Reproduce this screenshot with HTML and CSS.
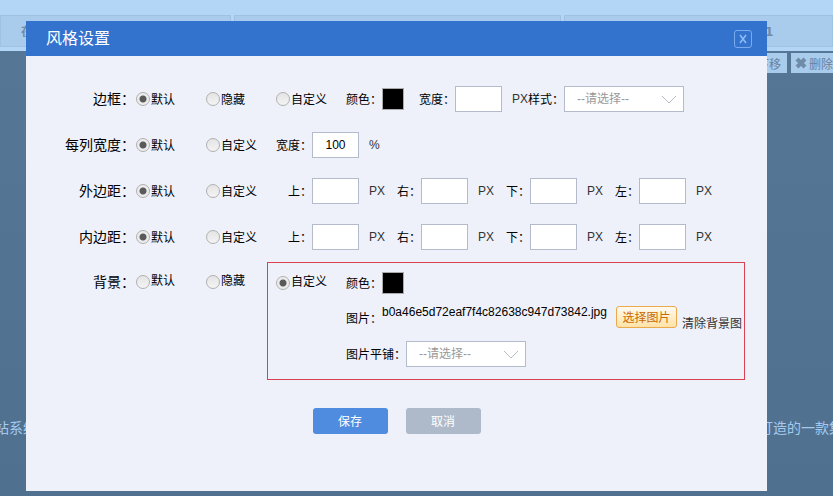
FILE: index.html
```
<!DOCTYPE html>
<html lang="zh-CN">
<head>
    <meta charset="UTF-8">
    <meta name="viewport" content="width=device-width, initial-scale=1.0">
    <title>风格设置</title>
    <link rel="stylesheet" href="styles.css">
</head>
<body>
    <div class="page">
        <div class="tabs">
            <div class="tab first">在</div>
            <div class="tab"></div>
            <div class="tab last">1</div>
        </div>
        <div class="tools">
            <button class="tool" type="button">下移</button>
            <button class="tool" type="button">
                <svg width="12" height="12" viewBox="0 0 12 12"><path d="M2 2L10 10M10 2L2 10" stroke="#6f8ba8" stroke-width="4"/></svg>删除
            </button>
        </div>
        <div class="intro">
            <span>站系统</span>
            <span>打造的一款集</span>
        </div>
    </div>

    <div class="dialog" role="dialog" aria-labelledby="title">
        <div class="header">
            <h1 id="title">风格设置</h1>
            <button class="close" type="button" aria-label="关闭">
                <svg width="8" height="10" viewBox="0 0 8 10"><path d="M1 1L7 9M7 1L1 9" stroke="#8dbcf5" stroke-width="1.6"/></svg>
            </button>
        </div>
        <form class="body">
            <div class="row">
                <span class="name">边框：</span>
                <label class="option"><input type="radio" name="border" checked><span>默认</span></label>
                <label class="option"><input type="radio" name="border"><span>隐藏</span></label>
                <label class="option"><input type="radio" name="border"><span>自定义</span></label>
                <span class="text">颜色：</span>
                <button class="color" type="button" aria-label="边框颜色"></button>
                <label class="text" for="bw">宽度：</label>
                <input class="num" id="bw" type="text">
                <span class="unit">PX</span>
                <label class="text" for="bs">样式：</label>
                <div class="select">
                    <select id="bs"><option>--请选择--</option></select>
                    <svg width="16" height="9" viewBox="0 0 16 9"><path d="M1 1L8 8L15 1" fill="none" stroke="#b9bdc6"/></svg>
                </div>
            </div>
            <div class="row">
                <span class="name">每列宽度：</span>
                <label class="option"><input type="radio" name="col" checked><span>默认</span></label>
                <label class="option"><input type="radio" name="col"><span>自定义</span></label>
                <label class="text" for="cw">宽度：</label>
                <input class="num" id="cw" type="text" value="100">
                <span class="unit">%</span>
            </div>
            <div class="row">
                <span class="name">外边距：</span>
                <label class="option"><input type="radio" name="margin" checked><span>默认</span></label>
                <label class="option"><input type="radio" name="margin"><span>自定义</span></label>
                <div class="sides">
                    <label><span class="text">上：</span><input class="num" type="text"><span class="unit">PX</span></label>
                    <label><span class="text">右：</span><input class="num" type="text"><span class="unit">PX</span></label>
                    <label><span class="text">下：</span><input class="num" type="text"><span class="unit">PX</span></label>
                    <label><span class="text">左：</span><input class="num" type="text"><span class="unit">PX</span></label>
                </div>
            </div>
            <div class="row">
                <span class="name">内边距：</span>
                <label class="option"><input type="radio" name="padding" checked><span>默认</span></label>
                <label class="option"><input type="radio" name="padding"><span>自定义</span></label>
                <div class="sides">
                    <label><span class="text">上：</span><input class="num" type="text"><span class="unit">PX</span></label>
                    <label><span class="text">右：</span><input class="num" type="text"><span class="unit">PX</span></label>
                    <label><span class="text">下：</span><input class="num" type="text"><span class="unit">PX</span></label>
                    <label><span class="text">左：</span><input class="num" type="text"><span class="unit">PX</span></label>
                </div>
            </div>
            <div class="row bg">
                <span class="name">背景：</span>
                <label class="option"><input type="radio" name="bg"><span>默认</span></label>
                <label class="option"><input type="radio" name="bg"><span>隐藏</span></label>
                <div class="custom">
                    <label class="option"><input type="radio" name="bg" checked><span>自定义</span></label>
                    <div class="detail">
                        <div class="line first">
                            <span class="text">颜色：</span>
                            <button class="color" type="button" aria-label="背景颜色"></button>
                        </div>
                        <div class="line image">
                            <span class="text">图片：</span>
                            <span class="file">b0a46e5d72eaf7f4c82638c947d73842.jpg</span>
                            <button class="choose" type="button">选择图片</button>
                            <a class="clear" href="#">清除背景图</a>
                        </div>
                        <div class="line">
                            <label class="text" for="tile">图片平铺：</label>
                            <div class="select">
                                <select id="tile"><option>--请选择--</option></select>
                                <svg width="16" height="9" viewBox="0 0 16 9"><path d="M1 1L8 8L15 1" fill="none" stroke="#b9bdc6"/></svg>
                            </div>
                        </div>
                    </div>
                </div>
            </div>
            <div class="footer">
                <button class="btn save" type="button">保存</button>
                <button class="btn cancel" type="button">取消</button>
            </div>
        </form>
    </div>
</body>
</html>
```
FILE: styles.css
```
*{
    box-sizing: border-box;
}
body{
    margin:0;
    font-family: "Liberation Sans", "Noto Sans CJK SC", sans-serif;
    font-size: 12px;
    color: #000;
}
button, input, select{
    font: inherit;
    margin:0;
    padding:0;
}
.page{
    min-height: 100vh;
    padding-top: 15px;
    overflow: hidden;
    background: linear-gradient(#b3d5f6 51px, #567696 51px, #50708f);
}
.tabs{
    display: grid;
    grid-template-columns: 231px 327px 1fr;
    gap:3px;
}
.tab{
    height: 32px;
    line-height: 32px;
    border:1px solid #9fc1e2;
    background-color: #a9cbec;
    color: #6f8ba8;
    font-weight: bold;
}
.tab.first{
    padding-left: 20px;
}
.tab.last{
    padding-left: 200px;
    font-family: "DejaVu Sans", sans-serif;
}
.tools{
    display: flex;
    justify-content: flex-end;
    gap:4px;
    margin-top: 6px;
}
.tool{
    display: flex;
    align-items: center;
    gap:2px;
    height: 20px;
    padding: 0 0 0 4px;
    border:0;
    background-color: #a9cbec;
    color: #66829f;
}
.tool:first-child{
    padding-right: 6px;
}
.intro{
    display: flex;
    justify-content: space-between;
    margin: 345px -10px 0 -5px;
    line-height: 20px;
    font-size: 14px;
    color: #a5c9ee;
}
.dialog{
    position: absolute;
    top:21px;
    left:26px;
    right:66px;
    background-color: #eef1fa;
}
.header{
    display: flex;
    align-items: center;
    justify-content: space-between;
    height: 35px;
    padding: 0 15px 0 20px;
    background-color: #3373cd;
}
.header h1{
    margin:0;
    padding-bottom: 3px;
    font-size: 16px;
    font-weight: normal;
    color: white;
}
.close{
    display: flex;
    align-items: center;
    justify-content: center;
    width:18px;
    height: 18px;
    border:1px solid #79acee;
    border-radius: 3px;
    background: none;
}
.body{
    padding: 20px 0 57px;
}
.row{
    display: flex;
    align-items: center;
    height: 46px;
    white-space: nowrap;
}
.name{
    width:110px;
    padding-right: 1px;
    text-align: right;
    font-size: 14px;
}
.name, .text, .option span{
    padding-bottom: 2px;
}
.option{
    display: flex;
    align-items: center;
    gap:1px;
    width:70px;
}
.option input{
    appearance: none;
    width:14px;
    height: 14px;
    border:1px solid #b0b0b0;
    border-radius: 50%;
    background: linear-gradient(#e4e4e4, #f4f4f4);
}
.option input:checked{
    background: radial-gradient(circle, #5a5a5a 3px, #ececec 4px);
}
.num{
    width:47px;
    height: 26px;
    border:1px solid #b4bccb;
    background-color: white;
    text-align: center;
}
.unit{
    margin-left: 10px;
    color: #333;
}
.color{
    width:22px;
    height: 22px;
    margin-right: 15px;
    border:1px solid #aaa;
    background-color: black;
}
.select{
    display: flex;
    align-items: center;
    width:120px;
    height: 26px;
    padding-right: 6px;
    border:1px solid #b4bccb;
    background-color: white;
}
.select select{
    flex:1;
    height: 24px;
    padding-left: 12px;
    border:0;
    background: none;
    appearance: none;
    color: #999;
}
.sides{
    display: flex;
    gap:12px;
    padding-left: 12px;
}
.sides label{
    display: flex;
    align-items: center;
}
.row.bg{
    align-items: flex-start;
    height: auto;
    padding-top: 2px;
}
.bg .name, .bg .option{
    height: 40px;
    line-height: 40px;
}
.custom{
    flex:1;
    display: flex;
    margin-left: -9px;
    margin-right: 22px;
    padding: 0 0 4px 8px;
    border:1px solid #d9434f;
}
.line{
    display: flex;
    align-items: center;
    height: 42px;
}
.line.first{
    height: 40px;
}
.line.image{
    height: 30px;
}
.file{
    align-self: flex-start;
    min-width: 234px;
    line-height: 18px;
}
.choose{
    align-self: flex-start;
    width:61px;
    height: 22px;
    margin: 3px 5px 0 0;
    padding-bottom: 2px;
    border:1px solid #eba94d;
    border-radius: 3px;
    background: linear-gradient(#fffaf0, #ffe2a6);
    color: #c66a00;
}
.clear{
    align-self: flex-end;
    line-height: 18px;
    color: #333;
    text-decoration: none;
}
.footer{
    display: flex;
    justify-content: center;
    gap:18px;
    margin-top: 28px;
}
.btn{
    width:75px;
    height: 26px;
    padding-bottom: 2px;
    border:0;
    border-radius: 3px;
    color: white;
}
.save{
    background-color: #4f8bdf;
}
.cancel{
    background-color: #aebac9;
}
```
